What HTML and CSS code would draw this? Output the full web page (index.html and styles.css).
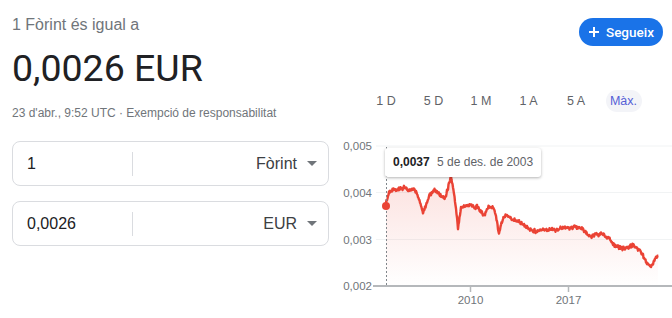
FILE: index.html
```html
<!DOCTYPE html>
<html lang="ca">
<head>
    <meta charset="UTF-8">
    <meta name="viewport" content="width=device-width, initial-scale=1.0">
    <title>Fòrint a EUR</title>
    <link rel="stylesheet" href="styles.css">
</head>
<body>
    <div class="panel">
        <div class="summary">
            <div class="label">1 Fòrint és igual a</div>
            <div class="rate">0,0026 EUR</div>
            <div class="meta">23 d'abr., 9:52 UTC · Exempció de responsabilitat</div>

            <div class="converter-row first">
                <div class="amount">1</div>
                <div class="divider"></div>
                <div class="currency">Fòrint <span class="arrow"></span></div>
            </div>
            <div class="converter-row">
                <div class="amount">0,0026</div>
                <div class="divider"></div>
                <div class="currency">EUR <span class="arrow"></span></div>
            </div>
        </div>

        <div class="chart-side">
            <div class="header">
                <button class="follow">
                    <svg width="10" height="10" viewBox="0 0 10 10"><path d="M5 0v10M0 5h10" stroke="#fff" stroke-width="2"/></svg>
                    Segueix
                </button>
            </div>

            <div class="ranges">
                <div class="range">1 D</div>
                <div class="range">5 D</div>
                <div class="range">1 M</div>
                <div class="range">1 A</div>
                <div class="range">5 A</div>
                <div class="range active">Màx.</div>
            </div>

            <div class="chart">
                <svg width="336" height="188" viewBox="336 130 336 188">
                    <defs>
                        <linearGradient id="fade" x1="0" y1="0" x2="0" y2="1">
                            <stop offset="0" stop-color="#ea4335" stop-opacity="0.16"/>
                            <stop offset="1" stop-color="#ea4335" stop-opacity="0"/>
                        </linearGradient>
                    </defs>
                    <g class="grid">
                        <line x1="376" y1="146" x2="672" y2="146"/>
                        <line x1="376" y1="192.5" x2="672" y2="192.5"/>
                        <line x1="376" y1="239.5" x2="672" y2="239.5"/>
                    </g>
                    <g class="ylabels">
                        <text x="372" y="150">0,005</text>
                        <text x="372" y="196.5">0,004</text>
                        <text x="372" y="243.5">0,003</text>
                        <text x="372" y="290">0,002</text>
                    </g>
                    <path id="area" fill="url(#fade)"/>
                    <path id="line" fill="none" stroke="#ea4335" stroke-width="2.4" stroke-linejoin="round"/>
                    <line class="cursor" x1="386.5" y1="147" x2="386.5" y2="286"/>
                    <circle cx="386" cy="206" r="4" fill="#ea4335"/>
                    <line class="axis" x1="373" y1="286" x2="672" y2="286"/>
                    <line class="tick" x1="470.5" y1="286" x2="470.5" y2="292"/>
                    <line class="tick" x1="568.5" y1="286" x2="568.5" y2="292"/>
                    <g class="xlabels">
                        <text x="470.5" y="304">2010</text>
                        <text x="568.5" y="304">2017</text>
                    </g>
                </svg>
                <div class="tooltip"><b>0,0037</b> 5 de des. de 2003</div>
            </div>
        </div>
    </div>

    <script>
        const anchors = [
            [386, 204], [389, 193], [394, 190], [398, 188], [403, 187], [408, 190], [414, 188],
            [419, 199], [423, 213], [426, 205], [430, 194], [434, 190], [438, 192], [443, 198],
            [446, 195], [451, 177], [454, 193], [456, 210], [458, 228], [461, 207],
            [465, 206], [469, 205], [474, 207], [479, 208], [484, 215], [489, 206], [494, 208],
            [497, 222], [499, 234], [501, 222], [503, 219], [506, 215], [509, 217],
            [513, 221], [517, 220], [524, 225], [530, 229], [536, 231], [543, 229], [549, 230],
            [556, 230], [563, 228], [569, 228], [576, 227], [583, 229], [589, 236],
            [596, 234], [601, 233], [609, 239], [613, 245], [616, 247], [622, 249],
            [629, 248], [634, 245], [639, 250], [643, 256], [647, 263], [651, 268],
            [654, 262], [658, 256]
        ];

        let seed = 11;
        function rand() {
            seed = (seed * 16807) % 2147483647;
            return seed / 2147483647 - 0.5;
        }

        const points = [];
        let drift = 0;
        for (let i = 0; i < anchors.length - 1; i++) {
            const [x1, y1] = anchors[i];
            const [x2, y2] = anchors[i + 1];
            for (let x = x1; x < x2; x += 0.5) {
                const t = (x - x1) / (x2 - x1);
                drift = drift * 0.6 + rand() * 2.2;
                points.push([x, y1 + (y2 - y1) * t + drift + rand() * 2.5]);
            }
        }
        points.push(anchors[anchors.length - 1]);

        const d = points.map((p, i) => (i ? 'L' : 'M') + p[0] + ' ' + p[1].toFixed(1)).join('');
        document.getElementById('line').setAttribute('d', d);
        document.getElementById('area').setAttribute('d', d + 'L658 286L386 286Z');
    </script>
</body>
</html>
```

FILE: styles.css
```css
body {
    margin: 0;
    font-family: 'Liberation Sans', Arial, sans-serif;
    color: #202124;
    background: #fff;
}

.panel {
    display: grid;
    grid-template-columns: 336px 336px;
    width: 672px;
    height: 318px;
    overflow: hidden;
}

.summary {
    padding-left: 12px;
}

.label {
    padding-top: 15px;
    font-size: 16px;
    line-height: 20px;
    color: #70757a;
}

.rate {
    margin-top: 11px;
    font-family: Roboto, 'Liberation Sans', sans-serif;
    font-size: 37.5px;
    line-height: 44px;
    color: #202124;
}

.meta {
    margin-top: 15px;
    font-size: 12px;
    line-height: 16px;
    color: #70757a;
}

.converter-row {
    display: flex;
    align-items: center;
    width: 317px;
    height: 45px;
    box-sizing: border-box;
    border: 1px solid #dadce0;
    border-radius: 8px;
    margin-top: 15px;
    font-size: 16px;
}

.converter-row.first {
    margin-top: 20px;
}

.amount {
    width: 105px;
    padding-left: 14px;
}

.divider {
    width: 1px;
    height: 24px;
    background: #dadce0;
}

.currency {
    flex: 1;
    display: flex;
    align-items: center;
    justify-content: flex-end;
    gap: 10px;
    padding-right: 11px;
    color: #3c4043;
}

.arrow {
    width: 0;
    height: 0;
    border-left: 5px solid transparent;
    border-right: 5px solid transparent;
    border-top: 5px solid #70757a;
}

.header {
    display: flex;
    justify-content: flex-end;
    padding-top: 18px;
    padding-right: 9px;
}

.follow {
    display: flex;
    align-items: center;
    gap: 7px;
    height: 28px;
    padding: 0 9px 0 10px;
    border: none;
    border-radius: 14px;
    background: #1a73e8;
    color: #fff;
    font-family: Roboto, 'Liberation Sans', sans-serif;
    font-size: 13.5px;
    font-weight: 500;
}

.ranges {
    display: flex;
    gap: 11.5px;
    margin-top: 44px;
    padding-left: 32px;
}

.range {
    width: 36px;
    height: 22px;
    line-height: 22px;
    text-align: center;
    font-size: 12.5px;
    color: #5f6368;
    border-radius: 11px;
}

.range.active {
    background: #f3f4f8;
    color: #5560d6;
}

.chart {
    position: relative;
    margin-top: 18px;
    height: 188px;
}

.chart svg {
    display: block;
}

.grid line {
    stroke: #f1f3f4;
    stroke-width: 1;
}

.ylabels text {
    font-family: 'Liberation Sans', Arial, sans-serif;
    font-size: 11.5px;
    fill: #70757a;
    text-anchor: end;
}

.xlabels text {
    font-family: 'Liberation Sans', Arial, sans-serif;
    font-size: 11.5px;
    fill: #70757a;
    text-anchor: middle;
}

.cursor {
    stroke: #80868b;
    stroke-width: 1;
    stroke-dasharray: 2 2;
}

.axis {
    stroke: #b5b8bb;
    stroke-width: 2;
}

.tick {
    stroke: #b5b8bb;
    stroke-width: 1.5;
}

.tooltip {
    position: absolute;
    left: 49px;
    top: 18px;
    width: 156px;
    height: 29px;
    box-sizing: border-box;
    padding-left: 8px;
    line-height: 29px;
    background: #fff;
    border-radius: 3px;
    box-shadow: 0 1px 3px rgba(0, 0, 0, 0.3);
    font-size: 12px;
    color: #5f6368;
    white-space: nowrap;
}

.tooltip b {
    color: #202124;
    margin-right: 4px;
}
```
